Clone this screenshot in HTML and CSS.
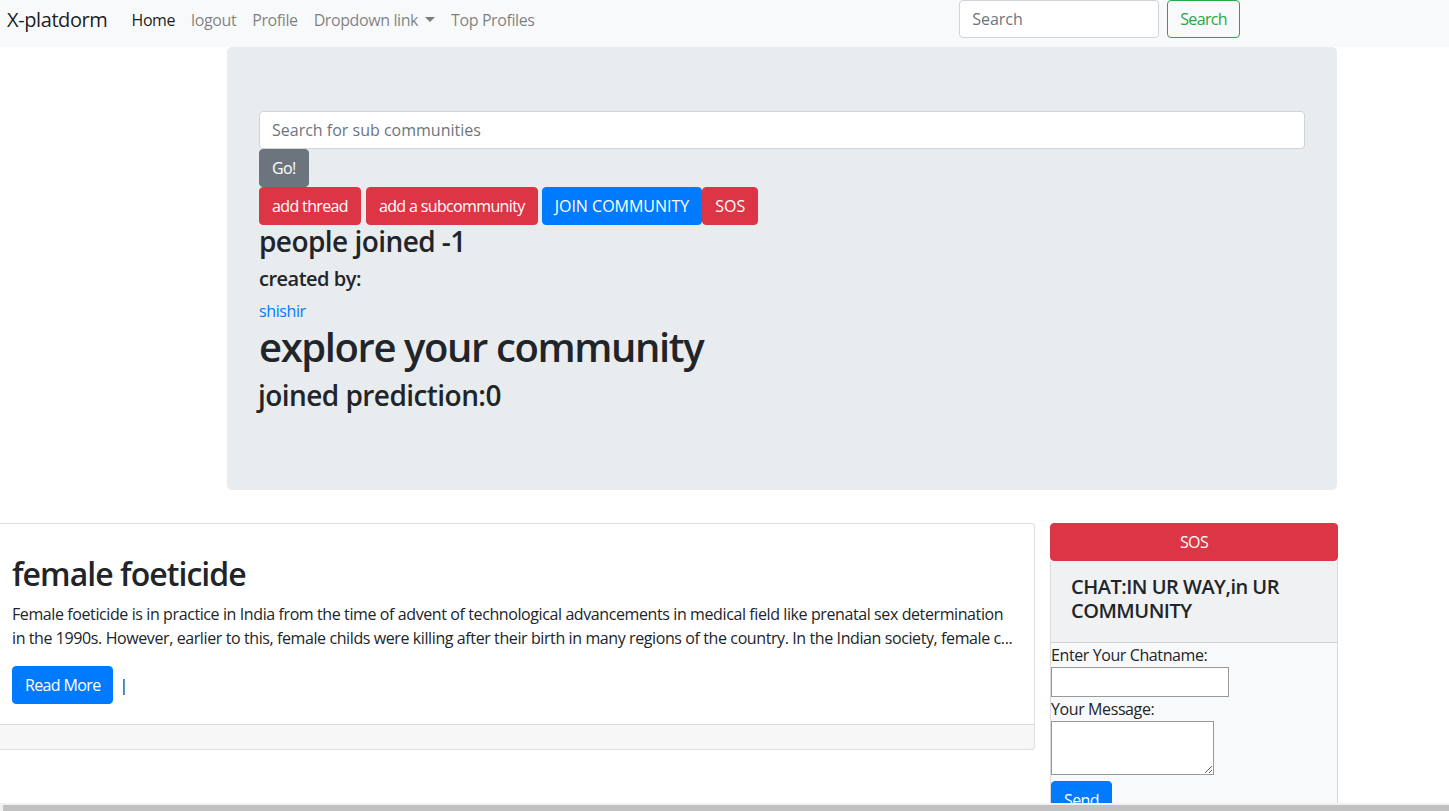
FILE: index.html
```html
<!DOCTYPE html>
<html lang="en">
<head>
<meta charset="utf-8">
<title>X-platdorm</title>
<link rel="stylesheet" href="styles.css">
</head>
<body>
<nav class="navbar">
  <a class="brand" href="#">X-platdorm</a>
  <ul class="nav">
    <li><a class="nav-link active" href="#">Home</a></li>
    <li><a class="nav-link" href="#">logout</a></li>
    <li><a class="nav-link" href="#">Profile</a></li>
    <li><a class="nav-link dropdown" href="#">Dropdown link</a></li>
    <li><a class="nav-link" href="#">Top Profiles</a></li>
  </ul>
  <form class="nav-search">
    <input class="form-control nav-input" type="text" placeholder="Search">
    <button class="btn btn-outline-success" type="button">Search</button>
  </form>
</nav>

<main>
  <section class="jumbotron">
    <input class="form-control" type="text" placeholder="Search for sub communities">
    <button class="btn btn-secondary" type="button">Go!</button>
    <div class="actions">
      <button class="btn btn-danger gap5" type="button">add thread</button>
      <button class="btn btn-danger gap4" type="button">add a subcommunity</button>
      <button class="btn btn-primary caps" type="button">JOIN COMMUNITY</button>
      <button class="btn btn-danger caps" type="button">SOS</button>
    </div>
    <h3>people joined -1</h3>
    <h5>created by:</h5>
    <a class="link" href="#">shishir</a>
    <h1>explore your community</h1>
    <h3 class="pred">joined prediction:0</h3>
  </section>

  <div class="lower">
    <div class="card thread">
      <div class="card-body">
        <h2 class="card-title">female foeticide</h2>
        <p class="card-text">Female foeticide is in practice in India from the time of advent of technological advancements in medical field like prenatal sex determination in the 1990s. However, earlier to this, female childs were killing after their birth in many regions of the country. In the Indian society, female c...</p>
        <div class="more-row"><button class="btn btn-primary" type="button">Read More</button><span class="bar">|</span></div>
      </div>
      <div class="card-footer"></div>
    </div>

    <aside class="side">
      <button class="btn btn-danger btn-block" type="button">SOS</button>
      <div class="chat">
        <div class="chat-header"><h5>CHAT:IN UR WAY,in UR COMMUNITY</h5></div>
        <div class="chat-body">
          <label class="chat-label">Enter Your Chatname:</label>
          <input class="chat-input" type="text">
          <label class="chat-label">Your Message:</label>
          <textarea class="chat-text"></textarea>
          <button class="btn btn-primary send" type="button">Send</button>
        </div>
      </div>
    </aside>
  </div>
</main>

<div class="hscroll"><div class="hthumb"></div></div>
</body>
</html>
```
FILE: styles.css
```css
* { box-sizing: border-box; }
html, body { overflow: hidden; height: 100%; }
body {
  margin: 0;
  font-family: "Open Sans", "Noto Sans", "Liberation Sans", sans-serif;
  font-size: 16px;
  line-height: 24px;
  color: #212529;
  background: #fff;
  letter-spacing: -0.025em;
}
a { text-decoration: none; }
h1, h2, h3, h5 { font-weight: 600; line-height: 1.2; margin: 0 0 8px; }
h1 { font-size: 40px; letter-spacing: -0.035em; }
h2 { font-size: 32px; letter-spacing: -0.03em; }
h3 { font-size: 28px; letter-spacing: -0.02em; }
h5 { font-size: 20px; letter-spacing: -0.025em; }

/* navbar */
.navbar {
  display: flex;
  align-items: flex-start;
  height: 47px;
  background: #f8f9fa;
  padding: 0 209px 0 7px;
}
.brand {
  font-size: 20px;
  line-height: 30px;
  padding: 5px 0;
  margin-right: 16px;
  color: rgba(0,0,0,.9);
}
.nav { display: flex; list-style: none; margin: 0; padding: 0; }
.nav-link {
  display: block;
  padding: 8px 8px;
  color: rgba(0,0,0,.5);
}
.nav-link.active { color: rgba(0,0,0,.9); }
.dropdown::after {
  content: "";
  display: inline-block;
  margin-left: 7px;
  vertical-align: 4px;
  border-top: 5px solid;
  border-left: 5px solid transparent;
  border-right: 5px solid transparent;
}
.nav-search { display: flex; margin-left: auto; gap: 8px; }
.nav-input { flex: 0 0 200px; width: 200px; }

/* forms / buttons */
.form-control {
  display: block;
  width: 100%;
  height: 38px;
  padding: 6px 12px;
  font: inherit;
  color: #495057;
  background: #fff;
  border: 1px solid #ced4da;
  border-radius: 4px;
}
.form-control::placeholder { color: #6c757d; }
.btn {
  display: inline-block;
  font: inherit;
  line-height: 24px;
  padding: 6px 12px;
  border: 1px solid transparent;
  border-radius: 4px;
  color: #fff;
  cursor: pointer;
  letter-spacing: -0.04em;
}
.btn.caps { letter-spacing: 0; }
.btn-outline-success { color: #28a745; border-color: #28a745; background: transparent; }
.btn-secondary { background: #6c757d; border-color: #6c757d; }
.btn-danger { background: #dc3545; border-color: #dc3545; }
.btn-primary { background: #007bff; border-color: #007bff; }
.btn-block { display: block; width: 100%; }

/* jumbotron */
.jumbotron {
  margin: 0 0 33px 227px;
  width: 1110px;
  background: #e9ecef;
  border-radius: 5px;
  padding: 64px 32px 70px;
}
.actions { display: flex; }
.gap5 { margin-right: 5px; }
.gap4 { margin-right: 4px; }
.link { display: block; color: #007bff; }
.pred { margin-left: -1px; }

/* lower */
.lower { display: flex; align-items: flex-start; }
.card {
  background: #fff;
  border: 1px solid rgba(0,0,0,.125);
  border-radius: 4px;
}
.thread { width: 1044px; margin-left: -9px; }
.card-body { padding: 20px; }
.card-title { margin-top: 11px; }
.card-text { margin: 0 0 16px; }
.more-row { display: flex; align-items: center; }
.bar { margin-left: 6px; color: #212529; }
.card-footer {
  height: 25px;
  background: rgba(0,0,0,.03);
  border-top: 1px solid rgba(0,0,0,.125);
}

.side { width: 288px; margin-left: 15px; }
.chat {
  background: #f8f9fa;
  border: 1px solid rgba(0,0,0,.125);
  border-top: 0;
  height: 300px;
}
.chat-header {
  background: #eff1f3;
  border-bottom: 1px solid rgba(0,0,0,.125);
  padding: 14px 20px 11px;
}
.chat-header h5 { line-height: 24px; }
.chat-label { display: block; }
.chat-input {
  display: block;
  width: 178px;
  height: 30px;
  border: 1px solid #999;
  font: inherit;
}
.chat-text {
  display: block;
  width: 163px;
  height: 54px;
  border: 1px solid #999;
  font: inherit;
  margin-bottom: 6px;
}
.send { padding: 6px 12px; }

/* fake horizontal scrollbar */
.hscroll {
  position: fixed;
  left: 0; right: 0; bottom: 0;
  height: 8px;
  background: #f1f1f1;
  padding: 2px 0 0 3px;
}
.hthumb { height: 6px; background: #c1c1c1; }
```
